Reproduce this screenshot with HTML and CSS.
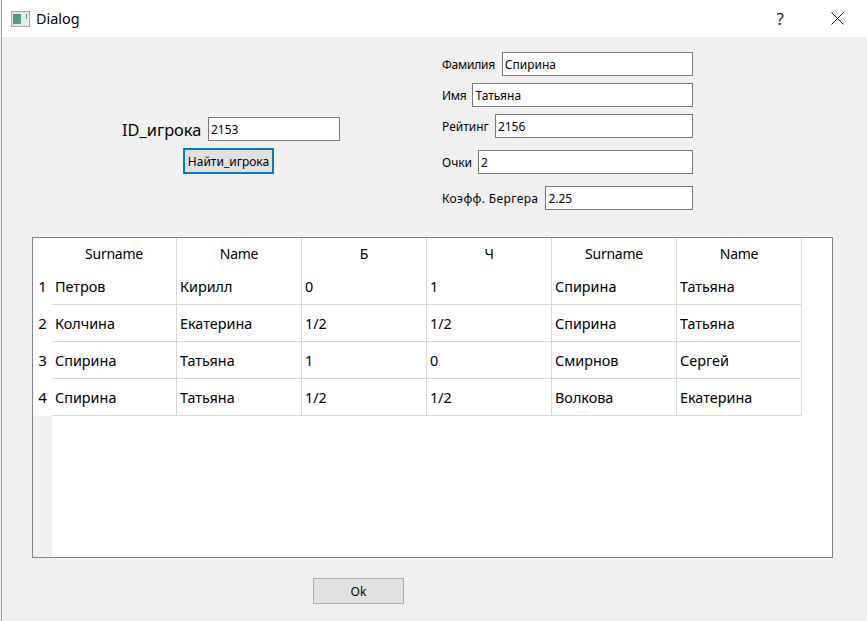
FILE: index.html
```html
<!DOCTYPE html>
<html lang="ru">
<head>
<meta charset="utf-8">
<title>Dialog</title>
<link rel="stylesheet" href="styles.css">
</head>
<body>
<div class="window">
  <header class="titlebar">
    <svg class="app-icon" width="20" height="16" viewBox="0 0 20 16">
      <defs><linearGradient id="g" x1="0" y1="0" x2="1" y2="1"><stop offset="0" stop-color="#4f86a8"/><stop offset="1" stop-color="#5aa86e"/></linearGradient></defs>
      <rect x="0.5" y="0.5" width="18" height="15" fill="#e4ebe8" stroke="#a3a8ab"/>
      <rect x="2" y="3" width="8" height="10" fill="url(#g)"/>
      <rect x="15" y="3" width="1" height="5" fill="#4f9a78"/>
    </svg>
    <span class="title">Dialog</span>
    <span class="help">?</span>
    <svg class="close" width="13" height="13" viewBox="0 0 13 13"><path d="M0.5 0.5L12.5 12.5M12.5 0.5L0.5 12.5" stroke="#222" stroke-width="1" fill="none"/></svg>
  </header>
  <main class="content">
    <section class="top">
      <div class="search">
        <div class="search-row">
          <label class="id-label">ID_игрока</label>
          <input class="field id-field" value="2153">
        </div>
        <button class="btn btn-focus">Найти_игрока</button>
      </div>
      <div class="form">
        <div class="form-row"><label class="form-label tight">Фамилия</label><input class="field" value="Спирина"></div>
        <div class="form-row snug"><label class="form-label tight">Имя</label><input class="field" value="Татьяна"></div>
        <div class="form-row snug"><label class="form-label">Рейтинг</label><input class="field" value="2156"></div>
        <div class="form-row wide snug"><label class="form-label">Очки</label><input class="field" value="2"></div>
        <div class="form-row wide"><label class="form-label spaced">Коэфф. Бергера</label><input class="field" value="2.25"></div>
      </div>
    </section>
    <section class="frame">
      <table class="grid">
        <thead>
          <tr><th class="corner"></th><th>Surname</th><th>Name</th><th>Б</th><th>Ч</th><th>Surname</th><th>Name</th></tr>
        </thead>
        <tbody>
          <tr><th class="rowhead">1</th><td>Петров</td><td>Кирилл</td><td>0</td><td>1</td><td>Спирина</td><td>Татьяна</td></tr>
          <tr><th class="rowhead">2</th><td>Колчина</td><td>Екатерина</td><td>1/2</td><td>1/2</td><td>Спирина</td><td>Татьяна</td></tr>
          <tr><th class="rowhead">3</th><td>Спирина</td><td>Татьяна</td><td>1</td><td>0</td><td>Смирнов</td><td>Сергей</td></tr>
          <tr><th class="rowhead">4</th><td>Спирина</td><td>Татьяна</td><td>1/2</td><td>1/2</td><td>Волкова</td><td>Екатерина</td></tr>
        </tbody>
      </table>
    </section>
    <footer class="actions"><button class="btn btn-ok">Ok</button></footer>
  </main>
</div>
</body>
</html>
```
FILE: styles.css
```css
* { box-sizing: border-box; }
html, body { margin: 0; height: 100%; }
body { font-family: "Noto Sans", "Open Sans", sans-serif; color: #000; overflow: hidden; background: #f0f0f0; }
.window { width: 866px; height: 621px; margin-left: 1px; background: #f0f0f0; border-left: 1px solid #e28a55; display: flex; flex-direction: column; }
.titlebar { height: 37px; background: #fff; display: flex; align-items: center; padding-left: 9px; flex: none; }
.app-icon { margin-right: 5px; }
.title { font-size: 14.4px; }
.help { margin-left: auto; font-size: 17px; margin-right: 47px; color: #222; }
.close { margin-right: 23px; }
.content { flex: 1; display: flex; flex-direction: column; }
.top { height: 200px; display: flex; padding: 15px 0 0 120px; flex: none; }
.search { width: 218px; display: flex; flex-direction: column; padding-top: 65px; }
.search-row { display: flex; align-items: center; justify-content: space-between; }
.id-label { font-size: 16.4px; white-space: nowrap; }
.id-field { width: 132px; flex: none; }
.field { height: 24px; border: 1px solid #7a7a7a; background: #fff; padding: 0 2px; font: 12px "Noto Sans", sans-serif; color: #000; outline: none; flex: 1; min-width: 0; border-radius: 0; }
.id-field { flex: none; }
.btn { font: 12px "Noto Sans", sans-serif; background: #e1e1e1; color: #000; width: 91px; border-radius: 0; padding: 0; }
.btn-focus { height: 26px; border: 2px solid #0078d7; margin: 7px 0 0 61px; }
.form { width: 251px; margin-left: 102px; display: flex; flex-direction: column; gap: 7px; }
.form-row { display: flex; align-items: center; gap: 7px; }
.form-row.snug { gap: 6px; }
.form-row.wide { margin-top: 5px; }
.form-label { font-size: 12px; white-space: nowrap; }
.form-label.tight { letter-spacing: -0.25px; }
.form-label.spaced { letter-spacing: 0.36px; }
.frame { margin-left: 30px; width: 801px; height: 321px; flex: none; border: 1px solid #82828f; background: linear-gradient(to right, #f0f0f0 19px, #fff 19px); }
.grid { border-collapse: separate; border-spacing: 0; table-layout: fixed; width: 768px; font-size: 14.4px; }
.grid thead th { height: 30px; font-weight: 400; font-size: 14px; letter-spacing: -0.25px; background: #fff; border-right: 1px solid #d8d8d8; width: 125px; padding: 0; }
.grid thead th.corner { width: 19px; border-right: 0; }
.grid td { height: 37px; padding: 0 3px; border-right: 1px solid #d8d8d8; border-bottom: 1px solid #d8d8d8; background: #fff; white-space: nowrap; }
.grid .rowhead { font-weight: 400; font-size: 15px; background: #fff; padding: 0 0 2px; text-align: center; }
.actions { padding: 20px 0 0 311px; }
.btn-ok { height: 26px; border: 1px solid #adadad; }
```
